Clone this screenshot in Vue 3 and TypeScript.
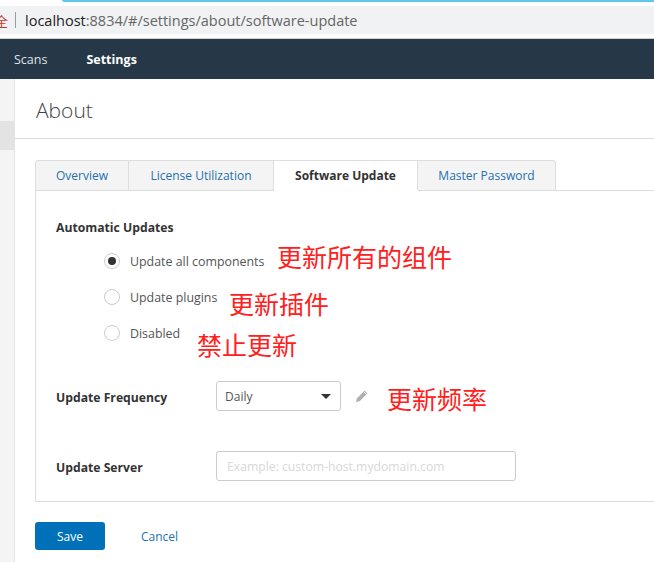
<script setup lang="ts">
const tabs = [
  { label: 'Overview', width: 94, active: false },
  { label: 'License Utilization', width: 145, active: false },
  { label: 'Software Update', width: 144, active: true },
  { label: 'Master Password', width: 138, active: false },
]
const radios = [
  { label: 'Update all components', checked: true },
  { label: 'Update plugins', checked: false },
  { label: 'Disabled', checked: false },
]
</script>

<template>
  <div class="page">
    <div class="browser">
      <div class="progress"></div>
      <div class="address">
        <span class="secure">全</span>
        <span class="divider"></span>
        <span class="url"><span class="host">localhost</span>:8834/#/settings/about/software-update</span>
      </div>
    </div>
    <nav class="nav">
      <span class="nav-item">Scans</span>
      <span class="nav-item current">Settings</span>
    </nav>
    <div class="body">
      <aside class="side"><div class="side-active"></div></aside>
      <main class="main">
        <h1 class="title">About</h1>
        <div class="content">
          <div class="tabs">
            <div
              v-for="tab in tabs"
              :key="tab.label"
              class="tab"
              :class="{ active: tab.active }"
              :style="{ width: tab.width + 'px' }"
            >{{ tab.label }}</div>
          </div>
          <section class="panel">
            <div class="group-title">Automatic Updates</div>
            <div class="radios">
              <div v-for="r in radios" :key="r.label" class="radio-row">
                <span class="radio"><span v-if="r.checked" class="dot"></span></span>
                <span class="radio-label">{{ r.label }}</span>
              </div>
            </div>
            <div class="field freq">
              <label class="field-label">Update Frequency</label>
              <div class="select">
                <span>Daily</span>
                <span class="caret"></span>
              </div>
              <svg class="pencil" width="14" height="14" viewBox="0 0 14 14">
                <path d="M1 13l.8-3.6L9.6 1.6l2.8 2.8-7.8 7.8z" fill="#b0b0b0" />
                <path d="M8.6 2.6l2.8 2.8" stroke="#fff" stroke-width="0.8" />
              </svg>
            </div>
            <div class="field server">
              <label class="field-label">Update Server</label>
              <input class="input" type="text" placeholder="Example: custom-host.mydomain.com" />
            </div>
          </section>
          <div class="actions">
            <button class="save" type="button">Save</button>
            <a class="cancel">Cancel</a>
          </div>
          <span class="note n1">更新所有的组件</span>
          <span class="note n2">更新插件</span>
          <span class="note n3">禁止更新</span>
          <span class="note n4">更新频率</span>
        </div>
      </main>
    </div>
  </div>
</template>

<style>
html, body { margin: 0; background: #fff; overflow: hidden; }
</style>

<style scoped>
.page {
  width: 654px;
  height: 562px;
  overflow: hidden;
  font-family: "Open Sans", "Noto Sans", sans-serif;
  font-size: 12px;
  color: #444;
  background: #fff;
}
.browser {
  height: 39px;
  box-sizing: border-box;
  border-bottom: 1px solid #d2d2d2;
  position: relative;
}
.progress {
  position: absolute;
  left: 62px;
  right: 0;
  top: 0;
  height: 2px;
  background: #5fc8e6;
  border-bottom-left-radius: 3px;
}
.address {
  position: absolute;
  left: 0;
  right: 0;
  top: 6px;
  height: 28px;
  background: #f1f2f3;
  display: flex;
  align-items: center;
}
.secure {
  font-family: "Noto Sans CJK SC", sans-serif;
  font-size: 13px;
  color: #c5392b;
  margin-left: -5px;
  width: 20px;
}
.divider { width: 1px; height: 16px; background: #9b9b9b; }
.url {
  margin-left: 9px;
  font-family: "Open Sans", sans-serif;
  font-size: 14.5px;
  color: #666;
  white-space: nowrap;
}
.host { color: #222; }
.nav {
  height: 40px;
  background: #263848;
  display: flex;
  align-items: center;
  padding-left: 14px;
  gap: 39px;
  color: #fff;
}
.nav-item { font-size: 12.5px; color: #dfe3e6; }
.nav-item.current { font-weight: 700; color: #fff; }
.body { display: flex; height: 483px; }
.side {
  width: 14px;
  background: #f4f4f4;
  border-right: 1px solid #e4e4e4;
  padding-top: 42px;
  flex: none;
}
.side-active { height: 29px; background: #e3e3e3; }
.main { flex: 1; min-width: 0; }
.title {
  margin: 0;
  height: 60px;
  box-sizing: border-box;
  border-bottom: 1px solid #ddd;
  padding: 15px 0 0 21px;
  font-size: 21px;
  line-height: 32px;
  font-weight: 300;
  color: #444;
}
.content { position: relative; padding: 21px 0 0 20px; }
.tabs { display: flex; height: 31px; }
.tab {
  box-sizing: border-box;
  height: 31px;
  background: #f4f4f4;
  border: 1px solid #ddd;
  border-left-width: 0;
  text-align: center;
  line-height: 29px;
  font-size: 12px;
  color: #1f70b0;
  white-space: nowrap;
}
.tab:first-child { border-left-width: 1px; border-top-left-radius: 3px; }
.tab:last-child { border-top-right-radius: 3px; }
.tab.active {
  background: #fff;
  border-bottom-color: #fff;
  font-weight: 700;
  color: #333;
  position: relative;
}
.panel {
  margin-top: -1px;
  margin-right: -2px;
  height: 312px;
  box-sizing: border-box;
  border: 1px solid #ddd;
  padding: 28px 0 0 20px;
}
.group-title { font-weight: 700; color: #333; line-height: 18px; font-size: 12.2px; }
.radios { padding: 6px 0 0 48px; }
.radio-row { display: flex; align-items: center; height: 36px; }
.radio {
  width: 16px;
  height: 16px;
  box-sizing: border-box;
  border: 1px solid #ccc;
  border-radius: 50%;
  background: #fff;
  display: flex;
  align-items: center;
  justify-content: center;
}
.dot { width: 8px; height: 8px; border-radius: 50%; background: #333; }
.radio-label { margin-left: 10px; color: #555; font-size: 12.4px; }
.field { display: flex; align-items: center; }
.freq { margin-top: 30px; }
.server { margin-top: 40px; }
.field-label { width: 160px; padding-top: 2px; font-weight: 700; color: #333; flex: none; font-size: 12.2px; }
.select {
  width: 125px;
  height: 30px;
  box-sizing: border-box;
  border: 1px solid #ccc;
  border-radius: 3px;
  display: flex;
  align-items: center;
  justify-content: space-between;
  padding: 0 9px 0 8px;
  color: #555;
}
.caret {
  width: 0;
  height: 0;
  border-left: 5px solid transparent;
  border-right: 5px solid transparent;
  border-top: 5px solid #333;
}
.pencil { margin-left: 14px; }
.input {
  width: 300px;
  height: 30px;
  box-sizing: border-box;
  border: 1px solid #ccc;
  border-radius: 3px;
  padding: 0 10px;
  font: inherit;
  font-size: 12.2px;
  outline: none;
}
.input::placeholder { color: #d8d8d8; opacity: 1; }
.actions { display: flex; align-items: center; margin-top: 20px; }
.save {
  width: 70px;
  height: 28px;
  border: 0;
  border-radius: 3px;
  background: #0071b9;
  color: #fff;
  font: inherit;
  padding: 0;
}
.cancel { margin-left: 36px; color: #1f70b0; }
.note {
  position: absolute;
  font-family: "Noto Sans CJK SC", sans-serif;
  font-size: 25px;
  line-height: 30px;
  color: #ff2020;
  white-space: nowrap;
}
.n1 { left: 262px; top: 102px; }
.n2 { left: 214px; top: 149px; }
.n3 { left: 182px; top: 190px; }
.n4 { left: 372px; top: 244px; }
</style>
